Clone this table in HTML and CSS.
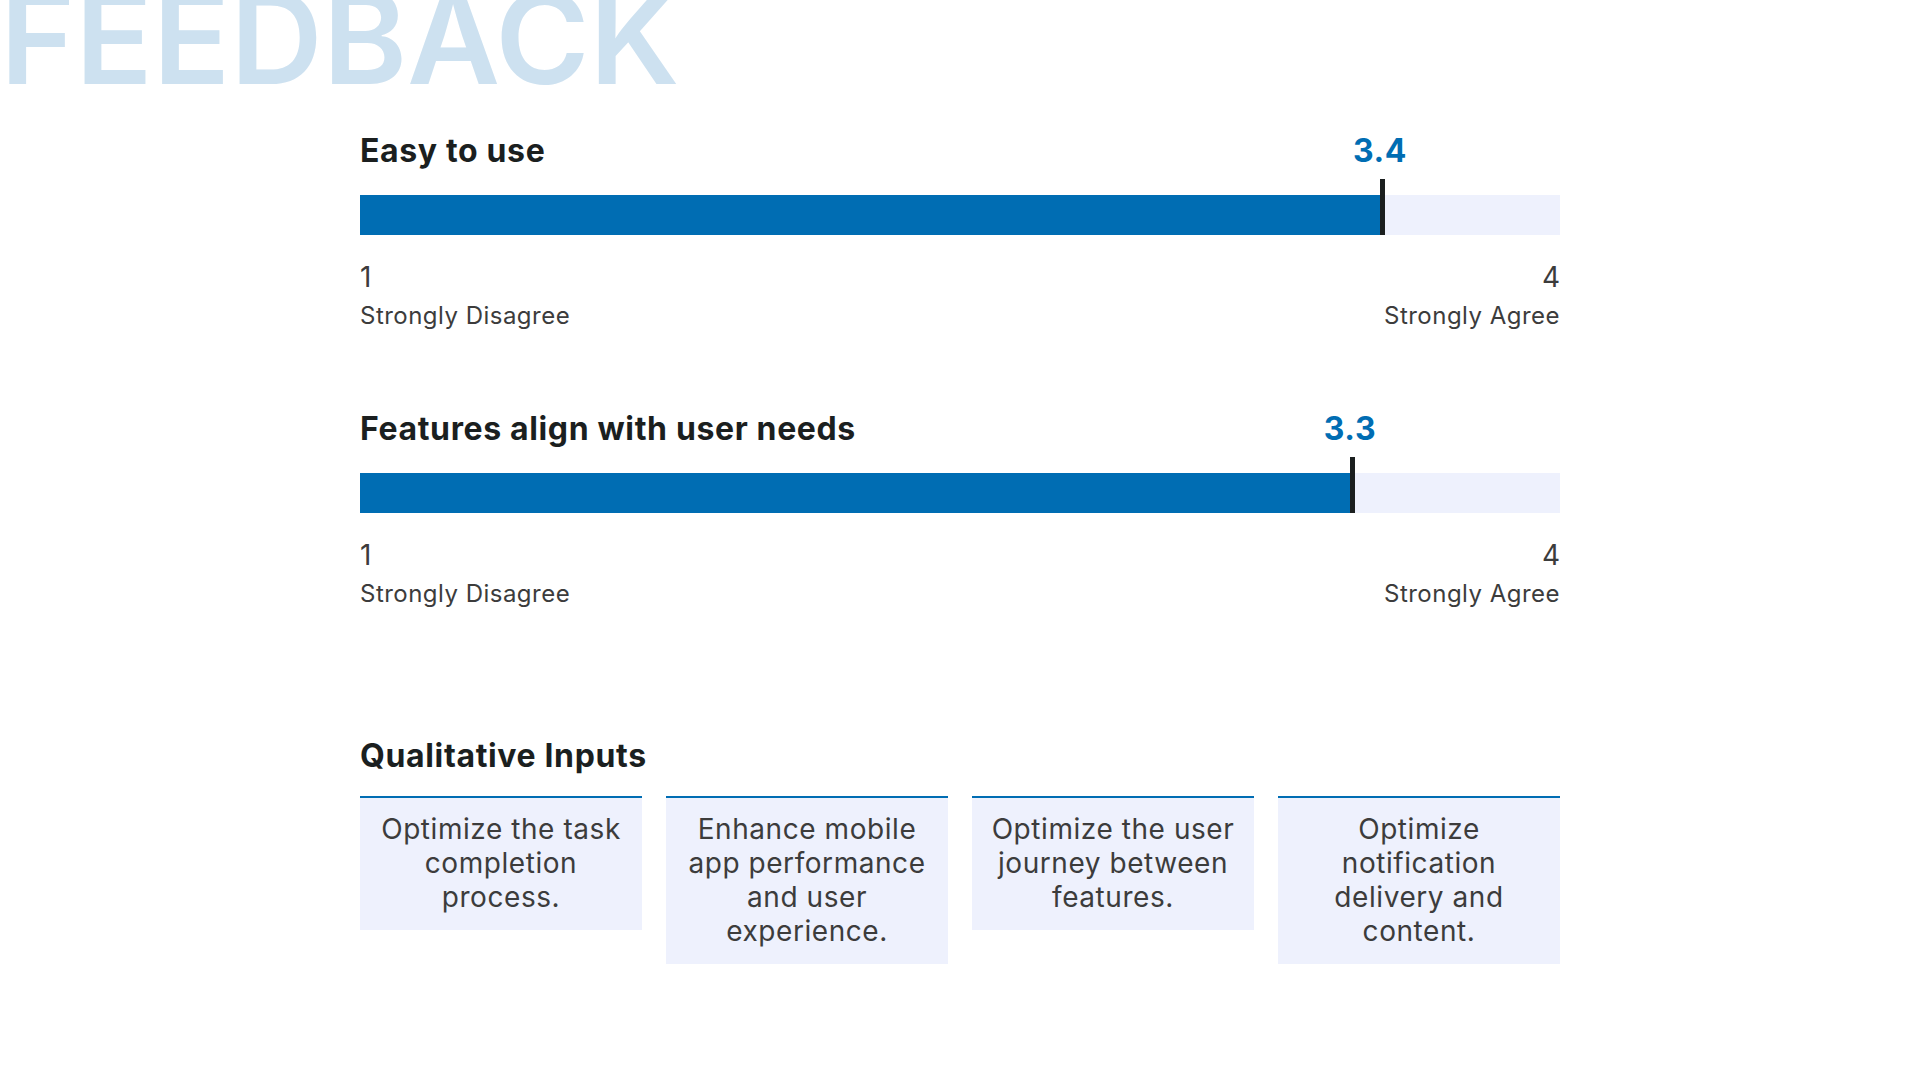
FILE: index.html
```html
<!DOCTYPE html>
<html lang="en">
<head>
<meta charset="utf-8">
<title>Feedback</title>
<link rel="stylesheet" href="styles.css">
</head>
<body>
<h1 class="hero">FEEDBACK</h1>
<main class="content">
  <section class="metric">
    <div class="metric-head">
      <h2 class="metric-title">Easy to use</h2>
      <span class="metric-value" style="left: 85%">3.4</span>
    </div>
    <div class="bar">
      <div class="bar-fill" style="width: 85%"></div>
      <div class="bar-marker" style="left: 85%"></div>
    </div>
    <div class="scale">
      <div class="scale-end">
        <span class="scale-num">1</span>
        <span class="scale-label">Strongly Disagree</span>
      </div>
      <div class="scale-end scale-end-right">
        <span class="scale-num">4</span>
        <span class="scale-label">Strongly Agree</span>
      </div>
    </div>
  </section>

  <section class="metric">
    <div class="metric-head">
      <h2 class="metric-title">Features align with user needs</h2>
      <span class="metric-value" style="left: 82.5%">3.3</span>
    </div>
    <div class="bar">
      <div class="bar-fill" style="width: 82.5%"></div>
      <div class="bar-marker" style="left: 82.5%"></div>
    </div>
    <div class="scale">
      <div class="scale-end">
        <span class="scale-num">1</span>
        <span class="scale-label">Strongly Disagree</span>
      </div>
      <div class="scale-end scale-end-right">
        <span class="scale-num">4</span>
        <span class="scale-label">Strongly Agree</span>
      </div>
    </div>
  </section>

  <section class="qualitative">
    <h2 class="qual-title">Qualitative Inputs</h2>
    <div class="cards">
      <div class="card">Optimize the task completion process.</div>
      <div class="card">Enhance mobile app performance and user experience.</div>
      <div class="card">Optimize the user journey between features.</div>
      <div class="card">Optimize notification delivery and content.</div>
    </div>
  </section>
</main>
</body>
</html>
```

FILE: styles.css
```css
* {
  box-sizing: border-box;
}

html, body {
  margin: 0;
  padding: 0;
  background: #ffffff;
}

body {
  font-family: Inter, "Noto Sans", "Liberation Sans", sans-serif;
  color: #3c3c3c;
  width: 1920px;
  height: 1080px;
  overflow: hidden;
}

.hero {
  margin: -26px 0 0 0;
  padding: 0;
  font-size: 128px;
  line-height: 1;
  font-weight: 600;
  color: #cde1f0;
  letter-spacing: 0;
  white-space: nowrap;
}

.content {
  width: 1200px;
  margin: 29px auto 0;
}

.metric {
  margin-bottom: 78px;
}

.metric-head {
  position: relative;
  height: 40px;
}

.metric-title {
  margin: 0;
  font-size: 32px;
  line-height: 40px;
  font-weight: 700;
  letter-spacing: 0.02em;
  color: #1b1f1f;
}

.metric-value {
  position: absolute;
  top: 0;
  transform: translateX(-50%);
  font-size: 32px;
  line-height: 40px;
  font-weight: 700;
  letter-spacing: 0.02em;
  color: #006db3;
}

.bar {
  position: relative;
  margin-top: 24px;
  height: 40px;
  background: #eef1fd;
}

.bar-fill {
  height: 100%;
  background: #006db3;
}

.bar-marker {
  position: absolute;
  top: -16px;
  bottom: 0;
  width: 5px;
  background: #1b1f1f;
}

.scale {
  display: flex;
  justify-content: space-between;
  margin-top: 25px;
}

.scale-end {
  display: flex;
  flex-direction: column;
  align-items: flex-start;
}

.scale-end-right {
  align-items: flex-end;
}

.scale-num {
  font-size: 28px;
  line-height: 34px;
  color: #3c3c3c;
}

.scale-label {
  margin-top: 7px;
  font-size: 24px;
  line-height: 30px;
  letter-spacing: 0.02em;
  color: #3c3c3c;
}

.qualitative {
  margin-top: 127px;
}

.qual-title {
  margin: 0;
  font-size: 32px;
  line-height: 40px;
  font-weight: 700;
  letter-spacing: 0.02em;
  color: #1b1f1f;
}

.cards {
  display: grid;
  grid-template-columns: repeat(4, 1fr);
  gap: 24px;
  align-items: start;
  margin-top: 20px;
}

.card {
  border-top: 2px solid #006db3;
  background: #eef1fd;
  padding: 14px 16px 16px;
  font-size: 28px;
  line-height: 34px;
  letter-spacing: 0.02em;
  text-align: center;
  color: #3c3c3c;
}
```
